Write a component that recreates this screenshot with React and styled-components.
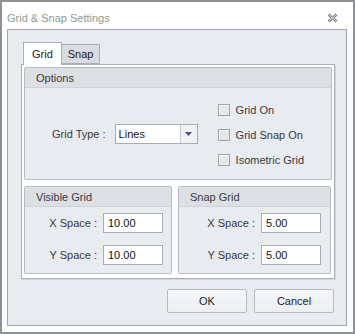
import React from "react";
import styled, { createGlobalStyle } from "styled-components";

const Global = createGlobalStyle`
  body {
    margin: 0;
    background: #ffffff;
    font-family: "Liberation Sans", Arial, sans-serif;
    font-size: 11px;
    color: #333;
  }
`;

const Window = styled.div`
  width: 355px;
  height: 334px;
  box-sizing: border-box;
  border: 2px solid #8e9297;
  background: #ffffff;
  display: flex;
  flex-direction: column;
`;

const TitleBar = styled.div`
  height: 27px;
  box-sizing: border-box;
  display: flex;
  align-items: center;
  justify-content: space-between;
  padding: 4px 15px 0 5px;
  font-size: 11px;
  color: #8b9a8d;
`;

const Body = styled.div`
  flex: 1;
  margin: 0 6px 6px 5px;
  border: 1px solid #a3a7ad;
  background: #e8ebef;
  padding: 12px 0 0 13px;
  display: flex;
  flex-direction: column;
`;

const TabStrip = styled.div`
  display: flex;
  align-items: flex-end;
  height: 22px;
  margin-left: 2px;
`;

const Tab = styled.div`
  box-sizing: border-box;
  height: ${(p) => (p.active ? "23px" : "20px")};
  padding: 0 ${(p) => (p.active ? "8px" : "6px")};
  margin-bottom: ${(p) => (p.active ? "-1px" : "0")};
  background: ${(p) => (p.active ? "#ffffff" : "#d8dbdf")};
  border: 1px solid #abafb5;
  border-bottom: ${(p) => (p.active ? "none" : "1px solid #abafb5")};
  border-left: ${(p) => (p.active ? "1px solid #abafb5" : "none")};
  display: flex;
  align-items: center;
  font-size: 11px;
  color: #222;
  position: relative;
  z-index: ${(p) => (p.active ? 2 : 1)};
`;

const Page = styled.div`
  width: 314px;
  height: 215px;
  box-sizing: border-box;
  background: #ffffff;
  border: 1px solid #abafb5;
  box-shadow: 1px 1px 0 #d3d6da;
  padding: 2px;
  display: flex;
  flex-direction: column;
  gap: 6px;
`;

const Group = styled.div`
  box-sizing: border-box;
  height: ${(p) => p.h}px;
  border: 1px solid #b9bdc3;
  border-radius: 2px;
  background: #e8ebef;
  display: flex;
  flex-direction: column;
`;

const GroupHeader = styled.div`
  height: 19px;
  flex-shrink: 0;
  background: #dcdfe3;
  border-bottom: 1px solid #cfd2d6;
  display: flex;
  align-items: center;
  padding-left: 11px;
  font-size: 11px;
  color: #3a3a3a;
`;

const OptionsBody = styled.div`
  flex: 1;
  display: flex;
  align-items: center;
  padding-left: 27px;
`;

const Label = styled.span`
  font-size: 11px;
  color: #3a3a3a;
  white-space: nowrap;
`;

const Combo = styled.div`
  width: 83px;
  height: 20px;
  box-sizing: border-box;
  margin-left: 9px;
  border: 1px solid #a9adb3;
  background: #ffffff;
  display: flex;
  align-items: stretch;
`;

const ComboText = styled.div`
  flex: 1;
  display: flex;
  align-items: center;
  padding-left: 3px;
  font-size: 11px;
  color: #111;
`;

const ComboButton = styled.div`
  width: 16px;
  border-left: 1px solid #c3c6cb;
  background: #f1f2f4;
  display: flex;
  align-items: center;
  justify-content: center;
`;

const CheckColumn = styled.div`
  margin-left: 20px;
  display: flex;
  flex-direction: column;
  gap: 13px;
  padding-top: 2px;
`;

const CheckRow = styled.div`
  display: flex;
  align-items: center;
  height: 12px;
  gap: 6px;
`;

const CheckBox = styled.span`
  width: 12px;
  height: 12px;
  box-sizing: border-box;
  border: 1px solid #9fa3a9;
  background: #e6e7e9;
  box-shadow: inset 1px 1px 0 #f7f7f8;
`;

const Lower = styled.div`
  display: grid;
  grid-template-columns: 148px 153px;
  gap: 6px;
`;

const SpaceBody = styled.div`
  display: grid;
  grid-template-columns: 1fr 60px;
  column-gap: 6px;
  row-gap: 12px;
  align-items: center;
  padding: 6px ${(p) => p.pr}px 0 0;
`;

const RightLabel = styled(Label)`
  text-align: right;
`;

const Input = styled.div`
  height: 20px;
  box-sizing: border-box;
  border: 1px solid #a9adb3;
  background: #ffffff;
  display: flex;
  align-items: center;
  padding-left: 4px;
  font-size: 11px;
  color: #111;
`;

const Footer = styled.div`
  display: flex;
  justify-content: flex-end;
  gap: 7px;
  padding: 10px 12px 0 0;
`;

const Button = styled.button`
  width: 80px;
  height: 24px;
  border: 1px solid #b7bbc1;
  border-radius: 2px;
  background: linear-gradient(#f6f7f8, #eceef1);
  font-family: "Liberation Sans", Arial, sans-serif;
  font-size: 11px;
  color: #222;
  padding: 0;
`;

const CloseIcon = () => (
  <svg width="11" height="10" viewBox="0 0 11 10">
    <path d="M1.5 1.5 L9.5 8.5 M9.5 1.5 L1.5 8.5" stroke="#707377" strokeWidth="2.6" fill="none" />
    <path d="M1.5 1.5 L9.5 8.5 M9.5 1.5 L1.5 8.5" stroke="#ffffff" strokeWidth="0.9" fill="none" />
  </svg>
);

const Check = ({ label }) => (
  <CheckRow>
    <CheckBox />
    <Label>{label}</Label>
  </CheckRow>
);

const SpaceGroup = ({ title, pr, x, y }) => (
  <Group h={88}>
    <GroupHeader>{title}</GroupHeader>
    <SpaceBody pr={pr}>
      <RightLabel>X Space :</RightLabel>
      <Input>{x}</Input>
      <RightLabel>Y Space :</RightLabel>
      <Input>{y}</Input>
    </SpaceBody>
  </Group>
);

export default function App() {
  return (
    <>
      <Global />
      <Window>
        <TitleBar>
          <span>Grid &amp; Snap Settings</span>
          <CloseIcon />
        </TitleBar>
        <Body>
          <TabStrip>
            <Tab active>Grid</Tab>
            <Tab>Snap</Tab>
          </TabStrip>
          <Page>
            <Group h={113}>
              <GroupHeader>Options</GroupHeader>
              <OptionsBody>
                <Label>Grid Type :</Label>
                <Combo>
                  <ComboText>Lines</ComboText>
                  <ComboButton>
                    <svg width="7" height="4" viewBox="0 0 7 4">
                      <path d="M0 0 H7 L3.5 4 Z" fill="#4b4f8a" />
                    </svg>
                  </ComboButton>
                </Combo>
                <CheckColumn>
                  <Check label="Grid On" />
                  <Check label="Grid Snap On" />
                  <Check label="Isometric Grid" />
                </CheckColumn>
              </OptionsBody>
            </Group>
            <Lower>
              <SpaceGroup title="Visible Grid" pr={8} x="10.00" y="10.00" />
              <SpaceGroup title="Snap Grid" pr={9} x="5.00" y="5.00" />
            </Lower>
          </Page>
          <Footer>
            <Button>OK</Button>
            <Button>Cancel</Button>
          </Footer>
        </Body>
      </Window>
    </>
  );
}
